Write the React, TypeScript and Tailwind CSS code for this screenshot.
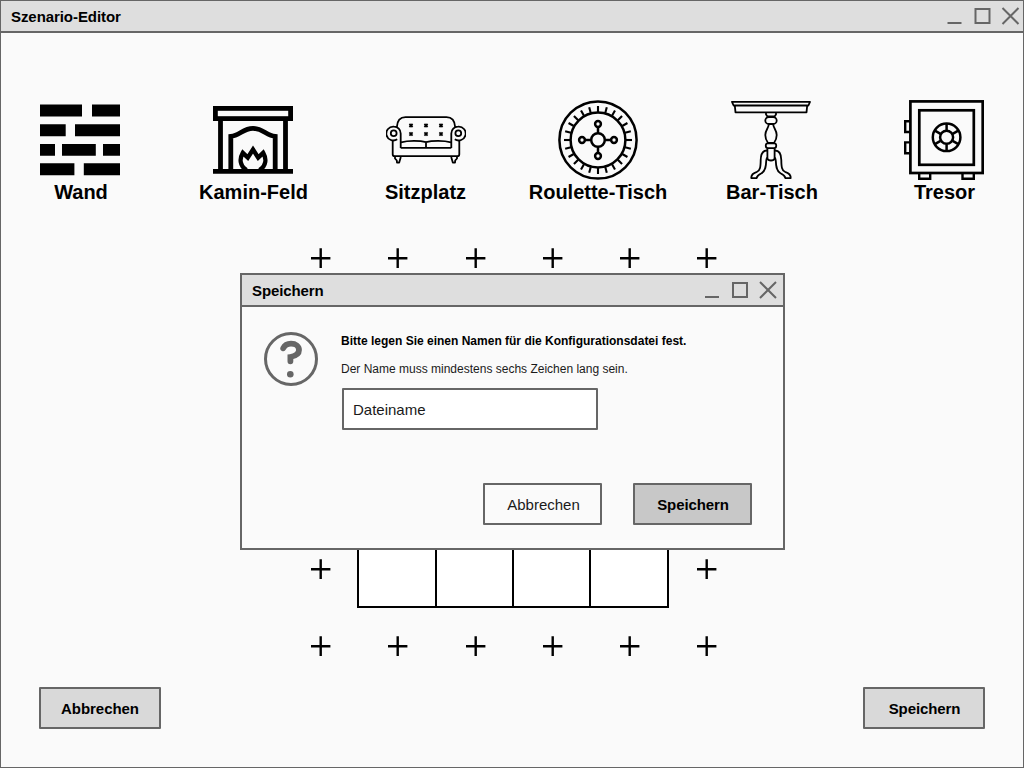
import type { ReactNode } from "react";

function WindowControls({ viewBox = "0 0 74 20" }: { viewBox?: string }) {
  return (
    <svg className="mt-[2px]" width="74" height="20" viewBox={viewBox} fill="none" stroke="#666" strokeWidth="2">
      <path d="M0 16H14" />
      <rect x="28" y="2" width="14" height="14" />
      <path d="M55 1L71 17M71 1L55 17" />
    </svg>
  );
}

function WallIcon() {
  return (
    <svg width="80" height="80" viewBox="40 100 80 80">
      <path d="M40 104.6H82V116.6H40ZM92 104.6H120V116.6H92ZM40 124.2H65.7V136.3H40ZM75 124.2H120V136.3H75ZM40 143.9H55V155.8H40ZM62 143.9H95.8V155.8H62ZM103 143.9H120V155.8H103ZM40 163.3H74.4V175.3H40ZM83.8 163.3H120V175.3H83.8Z" />
    </svg>
  );
}

function FireplaceIcon() {
  return (
    <svg width="80" height="80" viewBox="213 100 80 80" fill="none" stroke="#000" strokeWidth="4.8">
      <rect x="215.4" y="108.4" width="75.2" height="10.2" />
      <path d="M220.5 120V170M285.5 120V170M213 171.4H293" />
      <path d="M230.8 170V136.4C239.5 135.8 243 128.4 253 128.4S266.5 135.8 275.2 136.4V170" />
      <path strokeWidth="4.4" d="M246.5 170C239.5 165.500 239.5 158.500 242.800 152.800L247.800 157.600L253 149.500L258.200 157.600L263.200 152.800C266.500 158.500 266.500 165.500 259.500 170" />
    </svg>
  );
}

function SofaIcon() {
  const xs = [411, 426, 441];
  const ys = [125.4, 134];
  return (
    <svg width="80" height="80" viewBox="386 100 80 80" fill="none" stroke="#000" strokeWidth="1.8" strokeLinejoin="round">
      <path d="M396.800 127.200C397.200 121 399.500 117.200 405.500 117.200H446.500C452.500 117.200 454.800 121 455.200 127.200" />
      <path d="M400.700 148V133.500C400.700 129.500 397.800 126.700 394 126.700A6.900 6.900 0 1 0 397.200 139.200" />
      <path d="M451.300 148V133.500C451.300 129.500 454.200 126.700 458 126.700A6.900 6.900 0 1 1 454.800 139.200" />
      <circle cx="393.700" cy="133.300" r="2.900" />
      <circle cx="458.300" cy="133.300" r="2.900" />
      <path d="M392.700 140.500V154.200Q392.700 156.200 394.700 156.200H457.300Q459.300 156.200 459.300 154.200V140.500" />
      <path d="M400.700 147.900H451.300M426 142V148M401 142.300C408 140.400 420 140.400 426 142.200C432 140.400 444 140.400 451 142.300" />
      <path d="M395 156.500V158.500L396.800 160.500L397 162.600H399.200L400.800 157M457 156.500V158.500L455.200 160.500L455 162.600H452.800L451.200 157" />
      {ys.map((y) =>
        xs.map((x) => (
          <path key={`${x}-${y}`} d={`M${x - 1.6} ${y - 1.6}l3.2 3.2m0-3.2l-3.2 3.2`} />
        ))
      )}
    </svg>
  );
}

function RouletteIcon() {
  const ticks = Array.from({ length: 24 }, (_, i) => i * 15);
  const spokes = [0, 90, 180, 270];
  return (
    <svg width="80" height="80" viewBox="-40 -40 80 80" fill="none" stroke="#000" strokeWidth="2.5">
      <circle r="38.600" />
      <circle r="27.400" />
      <circle r="6.800" />
      {ticks.map((a) => (
        <path key={a} strokeWidth="2.1" d="M0 -28V-34" transform={`rotate(${a})`} />
      ))}
      {spokes.map((a) => (
        <g key={a} transform={`rotate(${a})`}>
          <path d="M0 -7V-13" />
          <circle cy="-16" r="2.900" />
        </g>
      ))}
    </svg>
  );
}

function BarTableIcon() {
  const leg =
    "M767 150.500C762 150.500 760.800 154.500 760.700 160C760.600 167 760.200 170.400 757 171.800C753 173 751 174.800 751.300 178.200H756.500C757 175.800 758.500 174.800 761.500 173.300C765.700 170.800 766 166 766.200 161C766.300 159 766.800 158.200 767.300 157.500";
  return (
    <svg width="80" height="80" viewBox="731 100 80 80" fill="none" stroke="#000" strokeWidth="1.8" strokeLinejoin="round">
      <path d="M732 101.800H810L808.400 105.500H733.600ZM734.800 105.500L735.500 112.300H806.500L807.200 105.500" />
      <path d="M766 113V114.500L767.500 116.500H774.500L776 114.500V113" />
      <rect x="765.300" y="117" width="11.400" height="7" rx="3.500" />
      <path d="M768.800 124.300C768.800 128 765.300 130 765.300 135C765.300 138.500 766.500 141 768 143H774C775.500 141 776.700 138.500 776.700 135C776.700 130 773.200 128 773.200 124.300" />
      <rect x="765.800" y="143.300" width="10.400" height="4.800" rx="2" />
      <path d="M767.400 148.500V158.500Q768 160.500 771 160.500T774.600 158.500V148.500" />
      <path d={leg} />
      <path d={leg} transform="translate(1542 0) scale(-1 1)" />
    </svg>
  );
}

function SafeIcon() {
  return (
    <svg width="80" height="80" viewBox="904 100 80 80" fill="none" stroke="#000" strokeWidth="2.700">
      <rect x="910.400" y="101.400" width="72.300" height="71.600" />
      <rect x="919.300" y="110.300" width="54.500" height="54.500" />
      <path strokeWidth="2.400" d="M910 121.300H905.200V132H910M910 142.400H905.200V153.300H910M919.200 173V178.800H930.200V173M962.500 173V178.800H973.800V173" />
      <g transform="translate(946.600 137.300)" strokeWidth="2.500">
        <circle r="13.800" />
        <circle r="6.500" />
        {[0, 60, 120, 180, 240, 300].map((a) => (
          <path key={a} d="M0 -7V-13.500" transform={`rotate(${a})`} />
        ))}
      </g>
    </svg>
  );
}

function PaletteItem({ label, labelClass = "pl-[2px]", children }: { label: string; labelClass?: string; children: ReactNode }) {
  return (
    <div className="flex w-[158px] flex-col items-center">
      {children}
      <span className={`text-xl leading-6 font-bold whitespace-nowrap ${labelClass}`}>{label}</span>
    </div>
  );
}

function Cell({ row, col }: { row: number; col: number }) {
  const edge = row === 0 || row === 5 || col === 0 || col === 5;
  if (!edge) return <div className="bg-white outline-2 -outline-offset-1 outline-black" />;
  return (
    <div className={col === 5 ? "-ml-px" : ""}>
      <svg width="77" height="77" viewBox="0 0 77 77" stroke="#000" strokeWidth="2.400">
        <path d="M30 39.300H49.400M39.700 29.300V49" />
      </svg>
    </div>
  );
}

function Board() {
  return (
    <div className="mt-[15px] ml-[280px] grid grid-cols-[77px_78px_77px_77px_78px_77px] grid-rows-[78px_77px_78px_78px_77px_78px]">
      {Array.from({ length: 36 }, (_, i) => (
        <Cell key={i} row={Math.floor(i / 6)} col={i % 6} />
      ))}
    </div>
  );
}

function SaveDialog() {
  return (
    <div className="absolute top-[272px] left-[239px] flex h-[277px] w-[545px] flex-col border-2 border-[#666] bg-[#fafafa]">
      <header className="flex h-8 shrink-0 items-center justify-between border-b-2 border-[#666] bg-[#dedede] pl-[10px] pr-[4px]">
        <h2 className="pt-[2px] text-[15px] font-bold tracking-[-0.1px]">Speichern</h2>
        <WindowControls />
      </header>
      <div className="flex pl-[22px] pt-[25px]">
        <svg width="54" height="54" viewBox="264 332 54 54" fill="none" stroke="#666" className="shrink-0">
          <circle cx="291" cy="359" r="25.500" strokeWidth="3" />
          <path strokeWidth="5.800" strokeLinecap="round" d="M283.200 348.300C284.800 345 287.500 343.700 291 343.700C295.800 343.700 299 346.200 299 350C299 354.500 295.500 356 290.400 357V361.300" />
          <circle cx="290.300" cy="374.200" r="3.300" fill="#666" stroke="none" />
        </svg>
        <div className="flex flex-col pt-px pl-[23px] text-xs leading-4">
          <p className="font-bold">Bitte legen Sie einen Namen für die Konfigurationsdatei fest.</p>
          <p className="mt-3 text-[#1a1a1a]">Der Name muss mindestens sechs Zeichen lang sein.</p>
          <input
            defaultValue="Dateiname"
            className="mt-[11px] ml-px h-[42px] w-[256px] rounded-[1px] border-2 border-[#666] bg-white px-[9px] pt-px text-[15px] text-[#1a1a1a] outline-none"
          />
        </div>
      </div>
      <div className="mt-auto mr-[31px] mb-[23px] flex justify-end gap-[31px] text-[15px]">
        <button className="h-[42px] w-[119px] rounded-[1px] border-2 border-[#666] bg-[#fafafa] pt-[3px] pl-[2px] text-[#1a1a1a]">Abbrechen</button>
        <button className="h-[42px] w-[119px] rounded-[1px] border-2 border-[#666] bg-[#c8c8c8] pt-[3px] pl-px font-bold tracking-[-0.1px]">Speichern</button>
      </div>
    </div>
  );
}

export default function App() {
  return (
    <div className="relative flex h-[768px] w-[1024px] flex-col overflow-hidden border border-[#666] bg-[#fafafa] font-['Liberation_Sans',Arial,sans-serif] text-black">
      <header className="flex h-8 shrink-0 items-center justify-between border-b-2 border-[#666] bg-[#dedede] pl-[10px] pr-[2px]">
        <h1 className="pt-[2px] text-[15px] font-bold tracking-[-0.07px]">Szenario-Editor</h1>
        <WindowControls viewBox="-0.5 0 74 20" />
      </header>
      <div className="mt-[67px] grid grid-cols-[173px_173px_172px_173px_173px_158px]">
        <PaletteItem label="Wand"><WallIcon /></PaletteItem>
        <PaletteItem label="Kamin-Feld" labelClass="pl-px"><FireplaceIcon /></PaletteItem>
        <PaletteItem label="Sitzplatz" labelClass="pr-px"><SofaIcon /></PaletteItem>
        <PaletteItem label="Roulette-Tisch" labelClass="pl-0"><RouletteIcon /></PaletteItem>
        <PaletteItem label="Bar-Tisch"><BarTableIcon /></PaletteItem>
        <PaletteItem label="Tresor" labelClass="pl-px"><SafeIcon /></PaletteItem>
      </div>
      <Board />
      <footer className="mt-[2px] flex justify-between px-[38px] text-[15px] font-bold">
        <button className="h-[42px] w-[122px] rounded-[1px] border-2 border-[#666] bg-[#d9d9d9] pt-[3px] tracking-[-0.05px]">Abbrechen</button>
        <button className="h-[42px] w-[122px] rounded-[1px] border-2 border-[#666] bg-[#d9d9d9] pt-[3px] pl-px tracking-[-0.1px]">Speichern</button>
      </footer>
      <SaveDialog />
    </div>
  );
}
